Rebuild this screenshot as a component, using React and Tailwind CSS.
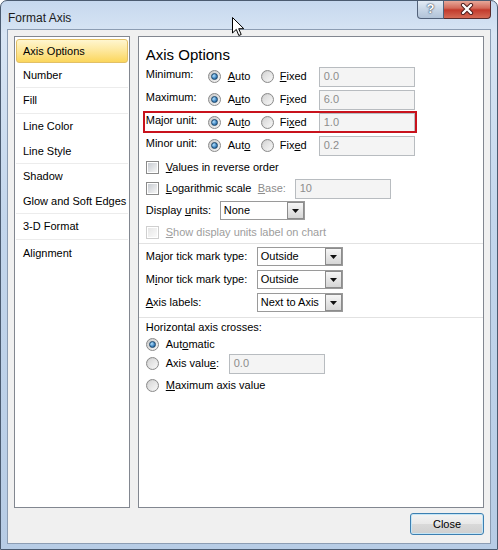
import React from "react";

const Radio = ({ on }) => (
  <span className="w-[13px] h-[13px] shrink-0 rounded-full border border-[#8a8a8a] bg-[linear-gradient(135deg,#c9c9c9,#f7f7f7)] flex items-center justify-center">
    {on ? (
      <span className="w-[7px] h-[7px] rounded-full border border-[#1c476b] bg-[radial-gradient(circle_at_35%_35%,#b4e2ff,#3a80bd_60%,#1b4f7c)]" />
    ) : (
      <span className="w-[9px] h-[9px] rounded-full bg-[linear-gradient(135deg,#d6d6d6,#f6f6f6)]" />
    )}
  </span>
);

const Check = ({ dim }) => (
  <span
    className={`w-[13px] h-[13px] shrink-0 border flex items-center justify-center bg-white ${
      dim ? "border-[#cfcfcf]" : "border-[#8a8a8a]"
    }`}
  >
    <span
      className={`w-[9px] h-[9px] ${
        dim
          ? "bg-[linear-gradient(135deg,#e6e6e6,#fafafa)]"
          : "bg-[linear-gradient(135deg,#c8ccd2,#f6f6f6)]"
      }`}
    />
  </span>
);

const Field = ({ value, w }) => (
  <div className={`h-[20px] border border-[#b8bcc0] bg-[#f4f4f4] text-[#8c8c8c] pl-[4px] flex items-center ${w}`}>
    {value}
  </div>
);

const Select = ({ value, w }) => (
  <div className={`h-[19px] border border-[#9a9a9a] bg-white flex items-center ${w}`}>
    <span className="flex-1 pl-[3px]">{value}</span>
    <span className="w-[17px] h-[17px] border border-[#8c8c8c] bg-[linear-gradient(180deg,#f6f6f6,#d6d6d6)] flex items-center justify-center">
      <svg width="7" height="4" viewBox="0 0 7 4">
        <path d="M0 0 H7 L3.5 4 Z" fill="#111" />
      </svg>
    </span>
  </div>
);

function UnitRow({ label, a, f, value, mark }) {
  return (
    <div className="relative h-[23px] flex items-center pl-[7px]">
      {mark && (
        <span className="absolute left-[4px] top-0 w-[274px] h-[22px] border-2 border-[#c8121c]" />
      )}
      <span className="w-[62px] mb-[4px]">{label}</span>
      <span className="w-[53px] flex items-center gap-[7px]">
        <Radio on />
        <span>{a}</span>
      </span>
      <span className="w-[58px] flex items-center gap-[6px]">
        <Radio />
        <span>{f}</span>
      </span>
      <Field value={value} w="w-[96px]" />
    </div>
  );
}

const items = [
  ["Axis Options", "h-[24px]", ""],
  ["Number", "h-[25px]", "border-b border-[#ececec]"],
  ["Fill", "h-[26px]", "border-b border-[#ececec]"],
  ["Line Color", "h-[25px]", ""],
  ["Line Style", "h-[25px]", "border-b border-[#ececec]"],
  ["Shadow", "h-[25px]", ""],
  ["Glow and Soft Edges", "h-[25px]", "border-b border-[#ececec]"],
  ["3-D Format", "h-[26px]", "border-b border-[#ececec]"],
  ["Alignment", "h-[26px]", ""],
];

export default function App() {
  return (
    <div className="relative w-[498px] h-[550px] overflow-hidden rounded-t-[7px] border border-[#4b5b70] bg-[linear-gradient(180deg,#c6d8ee_0%,#d8e5f4_6%,#c3d6ec_40%,#b7cce5_100%)] flex flex-col font-['Liberation_Sans',Arial,sans-serif] text-[11px] text-black">
      {/* title bar */}
      <div className="h-[28px] flex items-start shrink-0">
        <span className="pl-[7px] pt-[8px] text-[12px] text-[#1b1b1b]">Format Axis</span>
        <div className="ml-auto mr-[6px] flex -mt-[1px]">
          <span className="w-[27px] h-[19px] rounded-bl-[4px] border border-t-0 border-[#52627a] bg-[linear-gradient(180deg,#e6eef7,#c9d7e7_50%,#b1c3d8)] flex items-center justify-center text-[13px] font-bold text-white [text-shadow:0_0_2px_#2a3a50,0_0_1px_#2a3a50]">
            ?
          </span>
          <span className="w-[47px] h-[19px] rounded-br-[4px] border border-t-0 border-l-0 border-[#5a2b2b] bg-[linear-gradient(180deg,#eab0a2,#d36a5a_45%,#c23a2c_55%,#d56a55)] flex items-center justify-center">
            <svg width="14" height="12" viewBox="0 0 14 12">
              <path d="M3 2 L11 10 M11 2 L3 10" stroke="#4a1a1a" strokeWidth="4.2" strokeLinecap="round" />
              <path d="M3 2 L11 10 M11 2 L3 10" stroke="#ffffff" strokeWidth="2.4" strokeLinecap="round" />
            </svg>
          </span>
        </div>
      </div>

      {/* client area */}
      <div className="ml-[6px] mr-[6px] mb-[5px] h-[515px] border border-[#8c9db3] bg-[#f0f0f0] flex flex-col px-[6px] pt-[6px]">
        <div className="flex h-[472px]">
          <div className="w-[116px] border border-[#828790] bg-white px-[1px] pt-[2px]">
            {items.map(([t, h, b], i) => (
              <div
                key={t}
                className={`${h} ${b} flex items-center ${
                  i === 0
                    ? "rounded-[3px] border border-[#e2c067] bg-[linear-gradient(180deg,#fff6cf,#fde79a_50%,#fbd65c)] pl-[6px]"
                    : "pl-[7px]"
                }`}
              >
                {t}
              </div>
            ))}
          </div>

          <div className="ml-[8px] w-[347px] border border-[#828790] bg-white">
            <div className="h-[20px] mt-[8px] pl-[7px] text-[15px] leading-[20px]">Axis Options</div>
            <UnitRow label="Minimum:" a={<><u>A</u>uto</>} f={<><u>F</u>ixed</>} value="0.0" />
            <UnitRow label="Maximum:" a={<>A<u>u</u>to</>} f={<>F<u>i</u>xed</>} value="6.0" />
            <UnitRow label="Major unit:" a={<>Au<u>t</u>o</>} f={<>Fi<u>x</u>ed</>} value="1.0" mark />
            <UnitRow label="Minor unit:" a={<>Aut<u>o</u></>} f={<>Fix<u>e</u>d</>} value="0.2" />

            <div className="h-[21px] flex items-center pl-[7px] gap-[7px]">
              <Check />
              <span><u>V</u>alues in reverse order</span>
            </div>
            <div className="h-[21px] flex items-center pl-[7px]">
              <span className="w-[112px] flex items-center gap-[7px]">
                <Check />
                <span><u>L</u>ogarithmic scale</span>
              </span>
              <span className="w-[37px] text-[#8c8c8c]"><u>B</u>ase:</span>
              <Field value="10" w="w-[96px]" />
            </div>
            <div className="h-[23px] flex items-center pl-[7px]">
              <span className="w-[74px]">Display <u>u</u>nits:</span>
              <Select value="None" w="w-[85px]" />
            </div>
            <div className="h-[21px] flex items-center pl-[7px] gap-[7px] text-[#9d9d9d]">
              <Check dim />
              <span><u>S</u>how display units label on chart</span>
            </div>
            <div className="h-[1px] bg-[#e2e2e2]" />

            <div className="h-[23px] mt-[1px] flex items-center pl-[7px]">
              <span className="w-[111px]">Ma<u>j</u>or tick mark type:</span>
              <Select value="Outside" w="w-[86px]" />
            </div>
            <div className="h-[23px] flex items-center pl-[7px]">
              <span className="w-[111px]">M<u>i</u>nor tick mark type:</span>
              <Select value="Outside" w="w-[86px]" />
            </div>
            <div className="h-[23px] flex items-center pl-[7px]">
              <span className="w-[111px]"><u>A</u>xis labels:</span>
              <Select value="Next to Axis" w="w-[86px]" />
            </div>
            <div className="h-[1px] mt-[3px] bg-[#e2e2e2]" />

            <div className="h-[18px] flex items-center pl-[7px]">Horizontal axis crosses:</div>
            <div className="h-[16px] flex items-center pl-[7px] gap-[7px]">
              <Radio on />
              <span>Aut<u>o</u>matic</span>
            </div>
            <div className="h-[23px] flex items-center pl-[7px]">
              <span className="w-[83px] flex items-center gap-[7px]">
                <Radio />
                <span>Axis valu<u>e</u>:</span>
              </span>
              <Field value="0.0" w="w-[96px]" />
            </div>
            <div className="h-[20px] flex items-center pl-[7px] gap-[7px]">
              <Radio />
              <span><u>M</u>aximum axis value</span>
            </div>
          </div>
        </div>

        <div className="flex justify-end mt-[5px] pr-[0px]">
          <button className="w-[74px] h-[22px] rounded-[3px] border border-[#3c7fb1] bg-[linear-gradient(180deg,#f4f4f4,#e8e8e8_50%,#d9d9d9_51%,#cfcfcf)] shadow-[inset_0_0_0_1px_#c4e5f6] text-[11px]">
            Close
          </button>
        </div>
      </div>

      {/* mouse pointer */}
      <svg className="absolute left-[231px] top-[16px]" width="13" height="20" viewBox="0 0 13 20">
        <path d="M0.5 0.5 L0.5 16 L4.3 12.4 L6.8 18.5 L9.2 17.5 L6.7 11.7 L11.8 11.7 Z" fill="#fff" stroke="#000" strokeWidth="1" strokeLinejoin="round" />
      </svg>
    </div>
  );
}
